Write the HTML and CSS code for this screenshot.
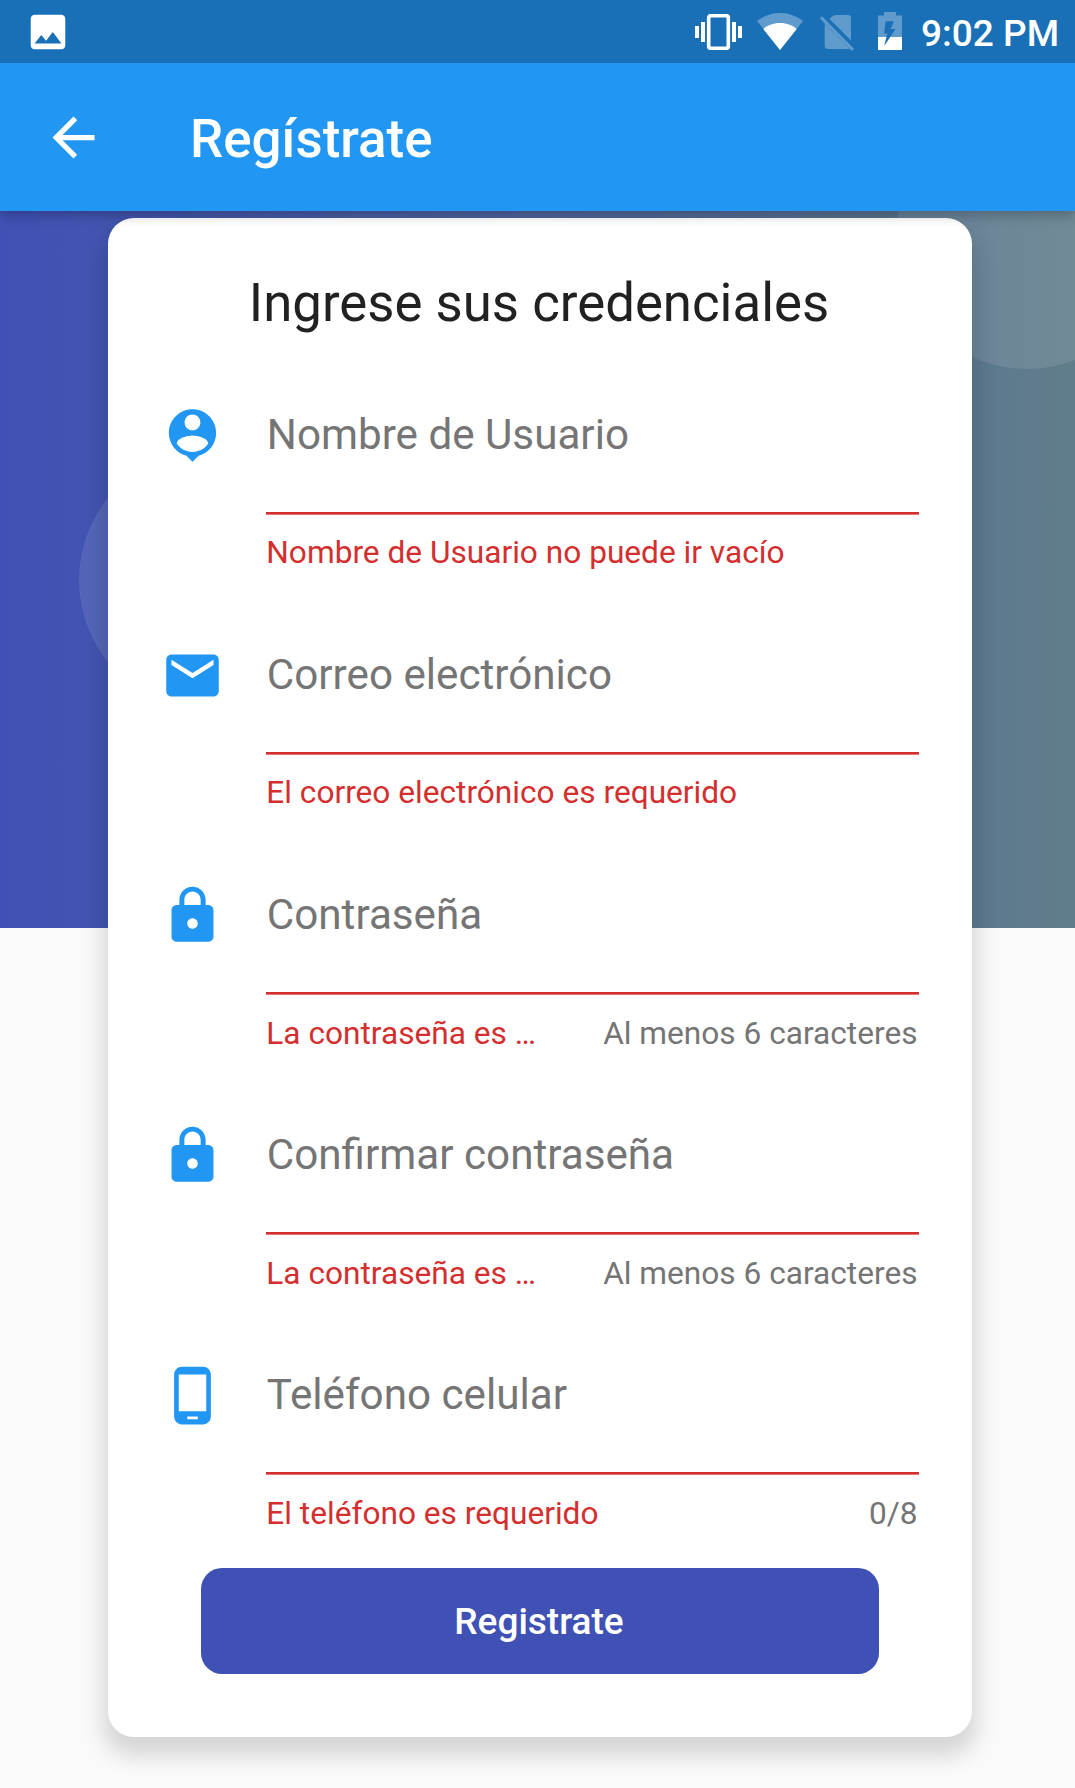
FILE: index.html
```
<!DOCTYPE html>
<html lang="es">
<head>
<meta charset="utf-8">
<title>Regístrate</title>
<link rel="stylesheet" href="styles.css">
</head>
<body>
<div class="backdrop">
  <span class="bubble bubble-right"></span>
  <span class="bubble bubble-left"></span>
</div>
<div class="floor"><span class="bubble bubble-bottom"></span></div>

<div class="screen">
  <header class="top">
    <div class="status">
      <svg class="photo" viewBox="0 0 24 24"><path d="M21 19V5c0-1.100-.900-2-2-2H5c-1.100 0-2 .900-2 2v14c0 1.100.900 2 2 2h14c1.100 0 2-.900 2-2zM8.500 13.500l2.500 3.010L14.500 12l4.500 6H5l3.500-4.500z"/></svg>
      <div class="system">
        <svg class="vibrate" viewBox="0 0 47 36"><path d="M0 12h4v12H0zM6 8h4v20H6zM37 8h4v20h-4zM43 12h4v12h-4z"/><rect x="13.700" y="1.700" width="19.600" height="32.600" rx="2" fill="none" stroke="#fff" stroke-width="3.600"/></svg>
        <svg class="wifi" viewBox="0 0 46 37"><path opacity=".3" d="M23 37L0 8C6 3.500 14 0 23 0s17 3.500 23 8z"/><path d="M23 37L6.300 16C10 12.500 16 10 23 10s13 2.500 16.700 6z"/></svg>
        <svg class="sim" viewBox="0 0 34 37"><g opacity=".3"><path d="M12 2.500Q13.500 1 15.500 1H28q3 0 3 3v22.500L9.500 5z"/><path d="M4.700 9.500L29.500 34.500Q29 35 28 35H8q-3.300 0-3.300-3.300z"/><path d="M2 2.300L0 4.500 32 37l2-2.200z"/></g></svg>
        <svg class="battery" viewBox="0 0 24 38"><path opacity=".3" fill-rule="evenodd" d="M6 3.500V0h12v3.500H24V25H12.200L17.500 17H12.700L15.800 9.300H7.600L6.200 21.500H9.300L8.400 25H0V3.500z"/><path d="M0 25H8.400L6.200 34L12.200 25H24V38H0z"/></svg>
        <span class="clock">9:02 PM</span>
      </div>
    </div>
    <div class="appbar">
      <svg class="back" viewBox="0 0 24 24"><path d="M20 11H7.830l5.590-5.590L12 4l-8 8 8 8 1.410-1.410L7.830 13H20v-2z"/></svg>
      <h1 class="title">Regístrate</h1>
    </div>
  </header>

  <main class="card">
    <h2 class="heading">Ingrese sus credenciales</h2>
    <form class="form">
      <div class="field">
        <svg class="icon" viewBox="0 0 24 24"><path fill-rule="evenodd" d="M12 2c-4.970 0-9 4.030-9 9 0 4.170 2.840 7.670 6.690 8.690L12 22l2.310-2.310C18.160 18.670 21 15.170 21 11c0-4.970-4.030-9-9-9zm0 2c1.660 0 3 1.340 3 3s-1.340 3-3 3-3-1.340-3-3 1.340-3 3-3zm0 14.300c-2.500 0-4.710-1.280-6-3.220.030-1.990 4-3.080 6-3.080 1.990 0 5.970 1.090 6 3.080-1.290 1.940-3.500 3.220-6 3.220z"/></svg>
        <div class="control">
          <label class="label">Nombre de Usuario</label>
          <div class="helper"><span class="error">Nombre de Usuario no puede ir vacío</span></div>
        </div>
      </div>
      <div class="field">
        <svg class="icon" viewBox="0 0 24 24"><path d="M20 4H4c-1.100 0-1.990.900-1.990 2L2 18c0 1.100.900 2 2 2h16c1.100 0 2-.900 2-2V6c0-1.100-.900-2-2-2zm0 4l-8 5-8-5V6l8 5 8-5v2z"/></svg>
        <div class="control">
          <label class="label">Correo electrónico</label>
          <div class="helper"><span class="error">El correo electrónico es requerido</span></div>
        </div>
      </div>
      <div class="field">
        <svg class="icon" viewBox="0 0 24 24"><path fill-rule="evenodd" d="M18 8h-1V6c0-2.760-2.240-5-5-5S7 3.240 7 6v2H6c-1.100 0-2 .900-2 2v10c0 1.100.900 2 2 2h12c1.100 0 2-.900 2-2V10c0-1.100-.900-2-2-2zm-6 9c-1.100 0-2-.900-2-2s.900-2 2-2 2 .900 2 2-.900 2-2 2zm3.100-9H8.900V6c0-1.710 1.390-3.100 3.100-3.100 1.710 0 3.100 1.390 3.100 3.100v2z"/></svg>
        <div class="control">
          <label class="label">Contraseña</label>
          <div class="helper counted"><span class="error">La contraseña es …</span><span class="counter">Al menos 6 caracteres</span></div>
        </div>
      </div>
      <div class="field">
        <svg class="icon" viewBox="0 0 24 24"><path fill-rule="evenodd" d="M18 8h-1V6c0-2.760-2.240-5-5-5S7 3.240 7 6v2H6c-1.100 0-2 .900-2 2v10c0 1.100.900 2 2 2h12c1.100 0 2-.900 2-2V10c0-1.100-.900-2-2-2zm-6 9c-1.100 0-2-.900-2-2s.900-2 2-2 2 .900 2 2-.900 2-2 2zm3.100-9H8.900V6c0-1.710 1.390-3.100 3.100-3.100 1.710 0 3.100 1.390 3.100 3.100v2z"/></svg>
        <div class="control">
          <label class="label">Confirmar contraseña</label>
          <div class="helper counted"><span class="error">La contraseña es …</span><span class="counter">Al menos 6 caracteres</span></div>
        </div>
      </div>
      <div class="field">
        <svg class="icon" viewBox="0 0 24 24"><path fill-rule="evenodd" d="M16 1H8C6.340 1 5 2.340 5 4v16c0 1.660 1.340 3 3 3h8c1.660 0 3-1.340 3-3V4c0-1.660-1.340-3-3-3zm-2 20h-4v-1h4v1zm3.250-3H6.750V4h10.500v14z"/></svg>
        <div class="control">
          <label class="label">Teléfono celular</label>
          <div class="helper counted"><span class="error">El teléfono es requerido</span><span class="counter">0/8</span></div>
        </div>
      </div>
      <button class="submit" type="button">Registrate</button>
    </form>
  </main>
</div>
</body>
</html>
```

FILE: styles.css
```
* { box-sizing: border-box; margin: 0; }

body {
  position: relative;
  width: 1075px;
  height: 1788px;
  background: #fafafa;
  font-family: Roboto, sans-serif;
}

svg { display: block; flex: none; }

/* Decorative layers behind the form */
.backdrop,
.floor {
  position: absolute;
  left: 0;
  width: 100%;
  overflow: hidden;
}
.backdrop {
  top: 0;
  height: 928px;
  background: linear-gradient(90deg, #3f51b5, #607d8b);
}
.floor {
  top: 928px;
  height: 860px;
}

.bubble {
  position: absolute;
  width: 262px;
  height: 262px;
  border-radius: 50%;
  background: rgba(255, 255, 255, .1);
}
.bubble-right { left: 896px; top: 107px; }
.bubble-left { left: 79px; top: 449px; }
.bubble-bottom { left: 844px; top: 733px; }

.screen { position: relative; }

.top {
  position: relative;
  z-index: 1;
  background: #2196f3;
  box-shadow: 0 4px 12px rgba(0, 0, 0, .26);
}

.status {
  display: flex;
  align-items: flex-start;
  justify-content: space-between;
  height: 63px;
  padding: 0 16px 0 24.500px;
  background: #1a70b6;
  fill: #fff;
}
.photo { width: 46px; height: 46px; margin-top: 8.500px; }
.system { display: flex; align-items: flex-start; }
.vibrate { width: 47px; height: 36px; margin: 14px 15px 0 0; }
.wifi { width: 46px; height: 37px; margin: 12.500px 17.500px 0 0; }
.sim { width: 34px; height: 37px; margin: 13.500px 23.500px 0 0; }
.battery { width: 24px; height: 38px; margin: 12px 19px 0 0; }
.clock {
  margin-top: 13px;
  color: #fff;
  font-size: 37px;
  font-weight: 500;
  line-height: 42px;
  white-space: nowrap;
}

.appbar {
  display: flex;
  align-items: center;
  height: 147.500px;
  padding: 1px 0 0 42px;
  fill: #fff;
}
.back { width: 63px; height: 63px; }
.title {
  margin-left: 85px;
  padding-top: 4px;
  color: #fff;
  font-size: 52.900px;
  font-weight: 500;
  line-height: 62px;
}

.card {
  width: 864px;
  height: 1519px;
  margin: 7.500px 0 0 108px;
  padding: 54px 53px 0;
  border-radius: 26px;
  background: #fff;
  box-shadow: 0 14px 22px 5px rgba(0, 0, 0, .15);
}

.heading {
  height: 131.500px;
  margin-left: -2px;
  color: #212121;
  font-size: 52.750px;
  font-weight: 400;
  line-height: 62px;
  text-align: center;
  white-space: nowrap;
}

.field {
  display: flex;
  gap: 42px;
  height: 240px;
}
.icon {
  width: 63px;
  height: 63px;
  fill: #2196f3;
}
.control { width: 653px; }
.label {
  display: block;
  height: 111.500px;
  padding: 6.500px 0 0 .8px;
  background: linear-gradient(#d32f2f 2px, #e57373 2px) bottom / 100% 3px no-repeat;
  color: #757575;
  font-size: 42.200px;
  line-height: 49px;
}
.helper {
  display: flex;
  justify-content: space-between;
  padding: 19px 1.500px 0 .3px;
  font-size: 31.650px;
  line-height: 37px;
}
.helper.counted { padding-top: 20px; }
.error { color: #d32f2f; }
.counter { color: #757575; }

.submit {
  display: block;
  width: 678px;
  height: 105.500px;
  margin: -35.500px auto 0 40px;
  padding: 3px 2px 0 0;
  border: 0;
  border-radius: 21px;
  background: #3f51b5;
  color: #fff;
  font: 500 37px/44px Roboto, sans-serif;
}
```
